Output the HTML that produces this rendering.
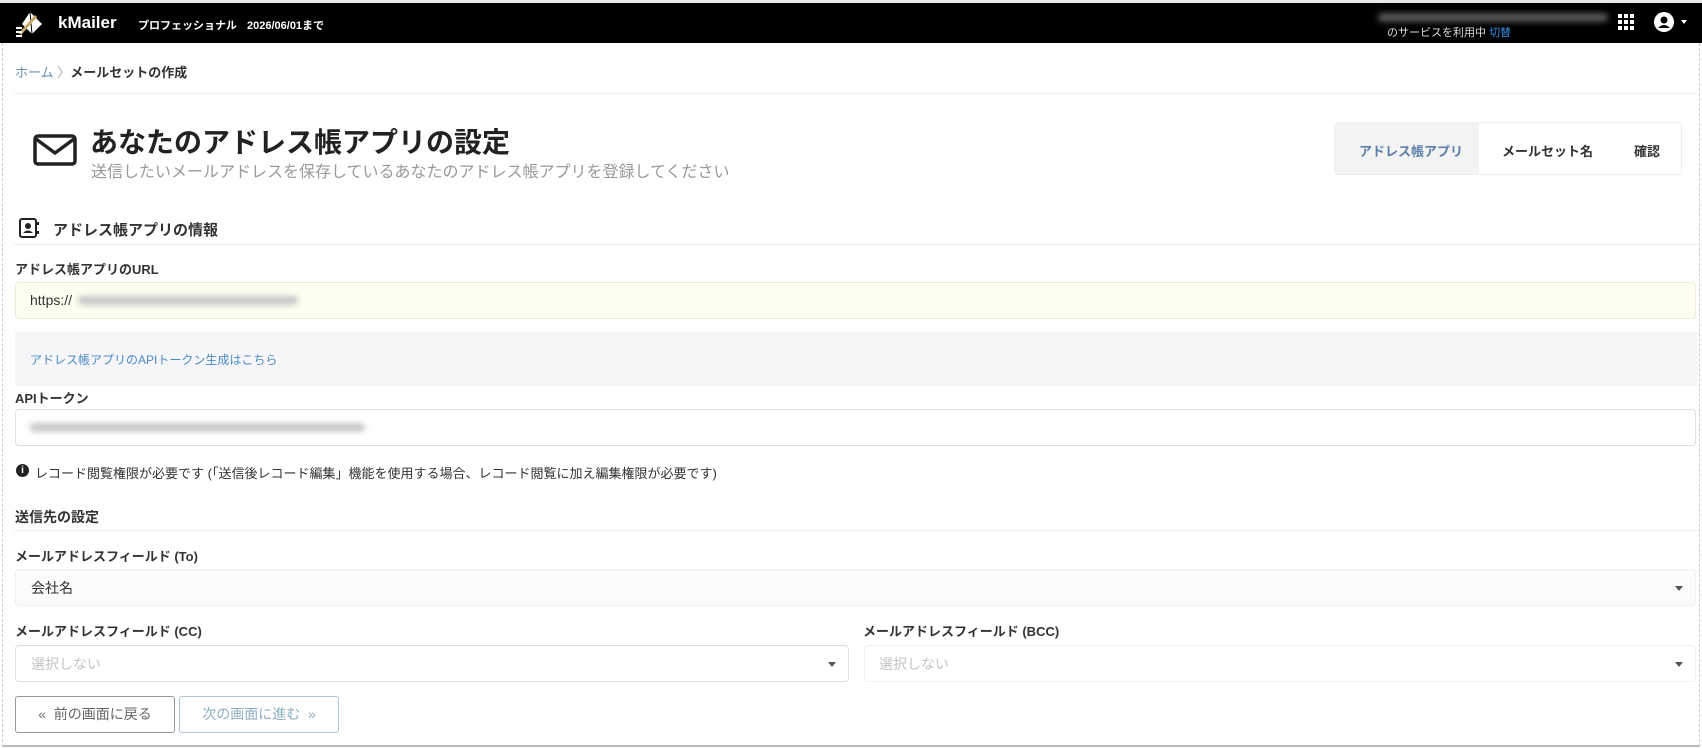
<!DOCTYPE html>
<html><head><meta charset="utf-8"><style>
*{box-sizing:border-box;margin:0;padding:0}
body{width:1702px;height:748px;background:#fff;font-family:"Liberation Sans","Noto Sans CJK JP",sans-serif;color:#333;position:relative;overflow:hidden}
.a{position:absolute;white-space:nowrap}
.frame{position:absolute;left:2px;top:43px;width:1698px;height:704px;border-left:1px dashed #ccc;border-right:1px dashed #ccc;border-bottom:2px solid #bbb}
.hr{position:absolute;height:1px;background:#eee}
.lbl{font-size:13px;font-weight:bold;color:#333}
.inp{position:absolute;border:1px solid #e0e0e0;border-radius:4px;background:#fff}
.caret{position:absolute;right:12px;top:50%;margin-top:-2px;width:0;height:0;border-left:4px solid transparent;border-right:4px solid transparent;border-top:5px solid #555}
.blur{position:absolute;height:9px;background:#c8c8c8;filter:blur(3px);border-radius:4px}
</style></head><body>
<div class="a" style="left:0;top:0;width:1702px;height:4px;background:#e8e8e8"></div>
<div class="a" style="left:0;top:3px;width:1702px;height:40px;background:#000"></div>
<svg class="a" style="left:14px;top:10px" width="34" height="28" viewBox="0 0 34 28"><path d="M16 2 L28 14 L18 24 L8 14 Z" fill="#fff"/><path d="M16 2 L18 24" stroke="#000" stroke-width="1"/><path d="M6 24 L22 6" stroke="#c9a96b" stroke-width="3"/><rect x="2" y="17" width="6" height="2" fill="#fff"/><rect x="2" y="21" width="6" height="2" fill="#fff"/><rect x="2" y="25" width="6" height="2" fill="#fff"/></svg>
<div class="a" style="left:58px;top:13px;color:#fff;font-size:17px;font-weight:bold">kMailer</div>
<div class="a" style="left:138px;top:17px;color:#fff;font-size:11px;font-weight:bold">プロフェッショナル</div>
<div class="a" style="left:247px;top:17px;color:#fff;font-size:11px;font-weight:bold">2026/06/01まで</div>
<div class="blur" style="left:1378px;top:13px;width:230px;background:#555"></div>
<div class="a" style="left:1387px;top:24px;color:#ddd;font-size:11px">のサービスを利用中 <span style="color:#3a8ee6">切替</span></div>
<svg class="a" style="left:1618px;top:14px" width="16" height="16" viewBox="0 0 16 16" fill="#fff"><rect x="0" y="0" width="4" height="4"/><rect x="6" y="0" width="4" height="4"/><rect x="12" y="0" width="4" height="4"/><rect x="0" y="6" width="4" height="4"/><rect x="6" y="6" width="4" height="4"/><rect x="12" y="6" width="4" height="4"/><rect x="0" y="12" width="4" height="4"/><rect x="6" y="12" width="4" height="4"/><rect x="12" y="12" width="4" height="4"/></svg>
<svg class="a" style="left:1654px;top:12px" width="36" height="20" viewBox="0 0 36 20"><circle cx="10" cy="10" r="10" fill="#fff"/><circle cx="10" cy="8" r="3.5" fill="#000"/><path d="M4 16 Q10 10 16 16" fill="#000"/><path d="M27 8 L33 8 L30 12 Z" fill="#fff"/></svg>
<div class="frame"></div>
<div class="a" style="left:15px;top:62px;font-size:13px"><span style="color:#6a8eb0">ホーム</span> <span style="color:#aaa">〉</span><b style="color:#333">メールセットの作成</b></div>
<div class="hr" style="left:14px;top:93px;width:1684px"></div>
<svg class="a" style="left:33px;top:134px" width="44" height="32" viewBox="0 0 44 32"><rect x="2" y="2" width="40" height="28" rx="3" fill="none" stroke="#222" stroke-width="3.5"/><path d="M3 5 L22 19 L41 5" fill="none" stroke="#222" stroke-width="3.5"/></svg>
<div class="a" style="left:90px;top:121px;font-size:28px;font-weight:bold;color:#222">あなたのアドレス帳アプリの設定</div>
<div class="a" style="left:91px;top:158px;font-size:16px;color:#999">送信したいメールアドレスを保存しているあなたのアドレス帳アプリを登録してください</div>
<div class="a" style="left:1334px;top:122px;width:348px;height:53px;border:1px solid #eee;border-radius:4px;background:#fff"></div>
<div class="a" style="left:1335px;top:123px;width:144px;height:51px;background:#f3f3f3"></div>
<div class="a" style="left:1359px;top:141px;font-size:13px;font-weight:bold;color:#5b7fa8">アドレス帳アプリ</div>
<div class="a" style="left:1502px;top:141px;font-size:13px;font-weight:bold;color:#333">メールセット名</div>
<div class="a" style="left:1634px;top:141px;font-size:13px;font-weight:bold;color:#333">確認</div>
<svg class="a" style="left:18px;top:217px" width="22" height="22" viewBox="0 0 22 22"><rect x="2" y="2" width="16" height="18" rx="2" fill="none" stroke="#222" stroke-width="2"/><circle cx="10" cy="9" r="3" fill="#222"/><path d="M5 16 Q10 11 15 16Z" fill="#222"/><rect x="19" y="5" width="2" height="3" fill="#222"/><rect x="19" y="14" width="2" height="3" fill="#222"/></svg>
<div class="a" style="left:53px;top:219px;font-size:15px;font-weight:bold;color:#333">アドレス帳アプリの情報</div>
<div class="hr" style="left:14px;top:244px;width:1684px"></div>
<div class="a lbl" style="left:15px;top:259px">アドレス帳アプリのURL</div>
<div class="inp" style="left:15px;top:282px;width:1681px;height:37px;background:#fdfdf0;border-color:#ececd8"></div>
<div class="a" style="left:30px;top:292px;font-size:14px;color:#333">https://</div>
<div class="blur" style="left:78px;top:296px;width:220px"></div>
<div class="a" style="left:15px;top:332px;width:1683px;height:54px;background:#f6f6f8"></div>
<div class="a" style="left:30px;top:351px;font-size:12px;color:#4a8ac4">アドレス帳アプリのAPIトークン生成はこちら</div>
<div class="a lbl" style="left:15px;top:388px">APIトークン</div>
<div class="inp" style="left:15px;top:409px;width:1681px;height:37px"></div>
<div class="blur" style="left:30px;top:423px;width:335px"></div>
<div class="a" style="left:16px;top:464px;width:13px;height:13px;border-radius:50%;background:#222;color:#fff;font-size:10px;font-weight:bold;text-align:center;line-height:13px">i</div>
<div class="a" style="left:35px;top:463px;font-size:13px;color:#333">レコード閲覧権限が必要です (「送信後レコード編集」機能を使用する場合、レコード閲覧に加え編集権限が必要です)</div>
<div class="a" style="left:15px;top:507px;font-size:14px;font-weight:bold;color:#333">送信先の設定</div>
<div class="hr" style="left:14px;top:530px;width:1684px"></div>
<div class="a lbl" style="left:15px;top:546px">メールアドレスフィールド (To)</div>
<div class="inp" style="left:15px;top:569px;width:1681px;height:37px;background:#fbfbfb;border-color:#f0f0f0"><div class="caret"></div></div>
<div class="a" style="left:31px;top:578px;font-size:14px;color:#333">会社名</div>
<div class="a lbl" style="left:15px;top:621px">メールアドレスフィールド (CC)</div>
<div class="a lbl" style="left:863px;top:621px">メールアドレスフィールド (BCC)</div>
<div class="inp" style="left:15px;top:645px;width:834px;height:37px"><div class="caret"></div></div>
<div class="a" style="left:31px;top:654px;font-size:14px;color:#c4c4c4">選択しない</div>
<div class="inp" style="left:864px;top:645px;width:832px;height:37px;border-color:#f0f0f0"><div class="caret"></div></div>
<div class="a" style="left:879px;top:654px;font-size:14px;color:#c4c4c4">選択しない</div>
<div class="a" style="left:15px;top:696px;width:160px;height:37px;border:1px solid #999;border-radius:3px;font-size:14px;color:#666;text-align:center;line-height:35px">« &nbsp;前の画面に戻る</div>
<div class="a" style="left:179px;top:696px;width:160px;height:37px;border:1px solid #a6cbd6;border-radius:3px;font-size:14px;color:#8aaec0;text-align:center;line-height:35px">次の画面に進む &nbsp;»</div>
</body></html>
